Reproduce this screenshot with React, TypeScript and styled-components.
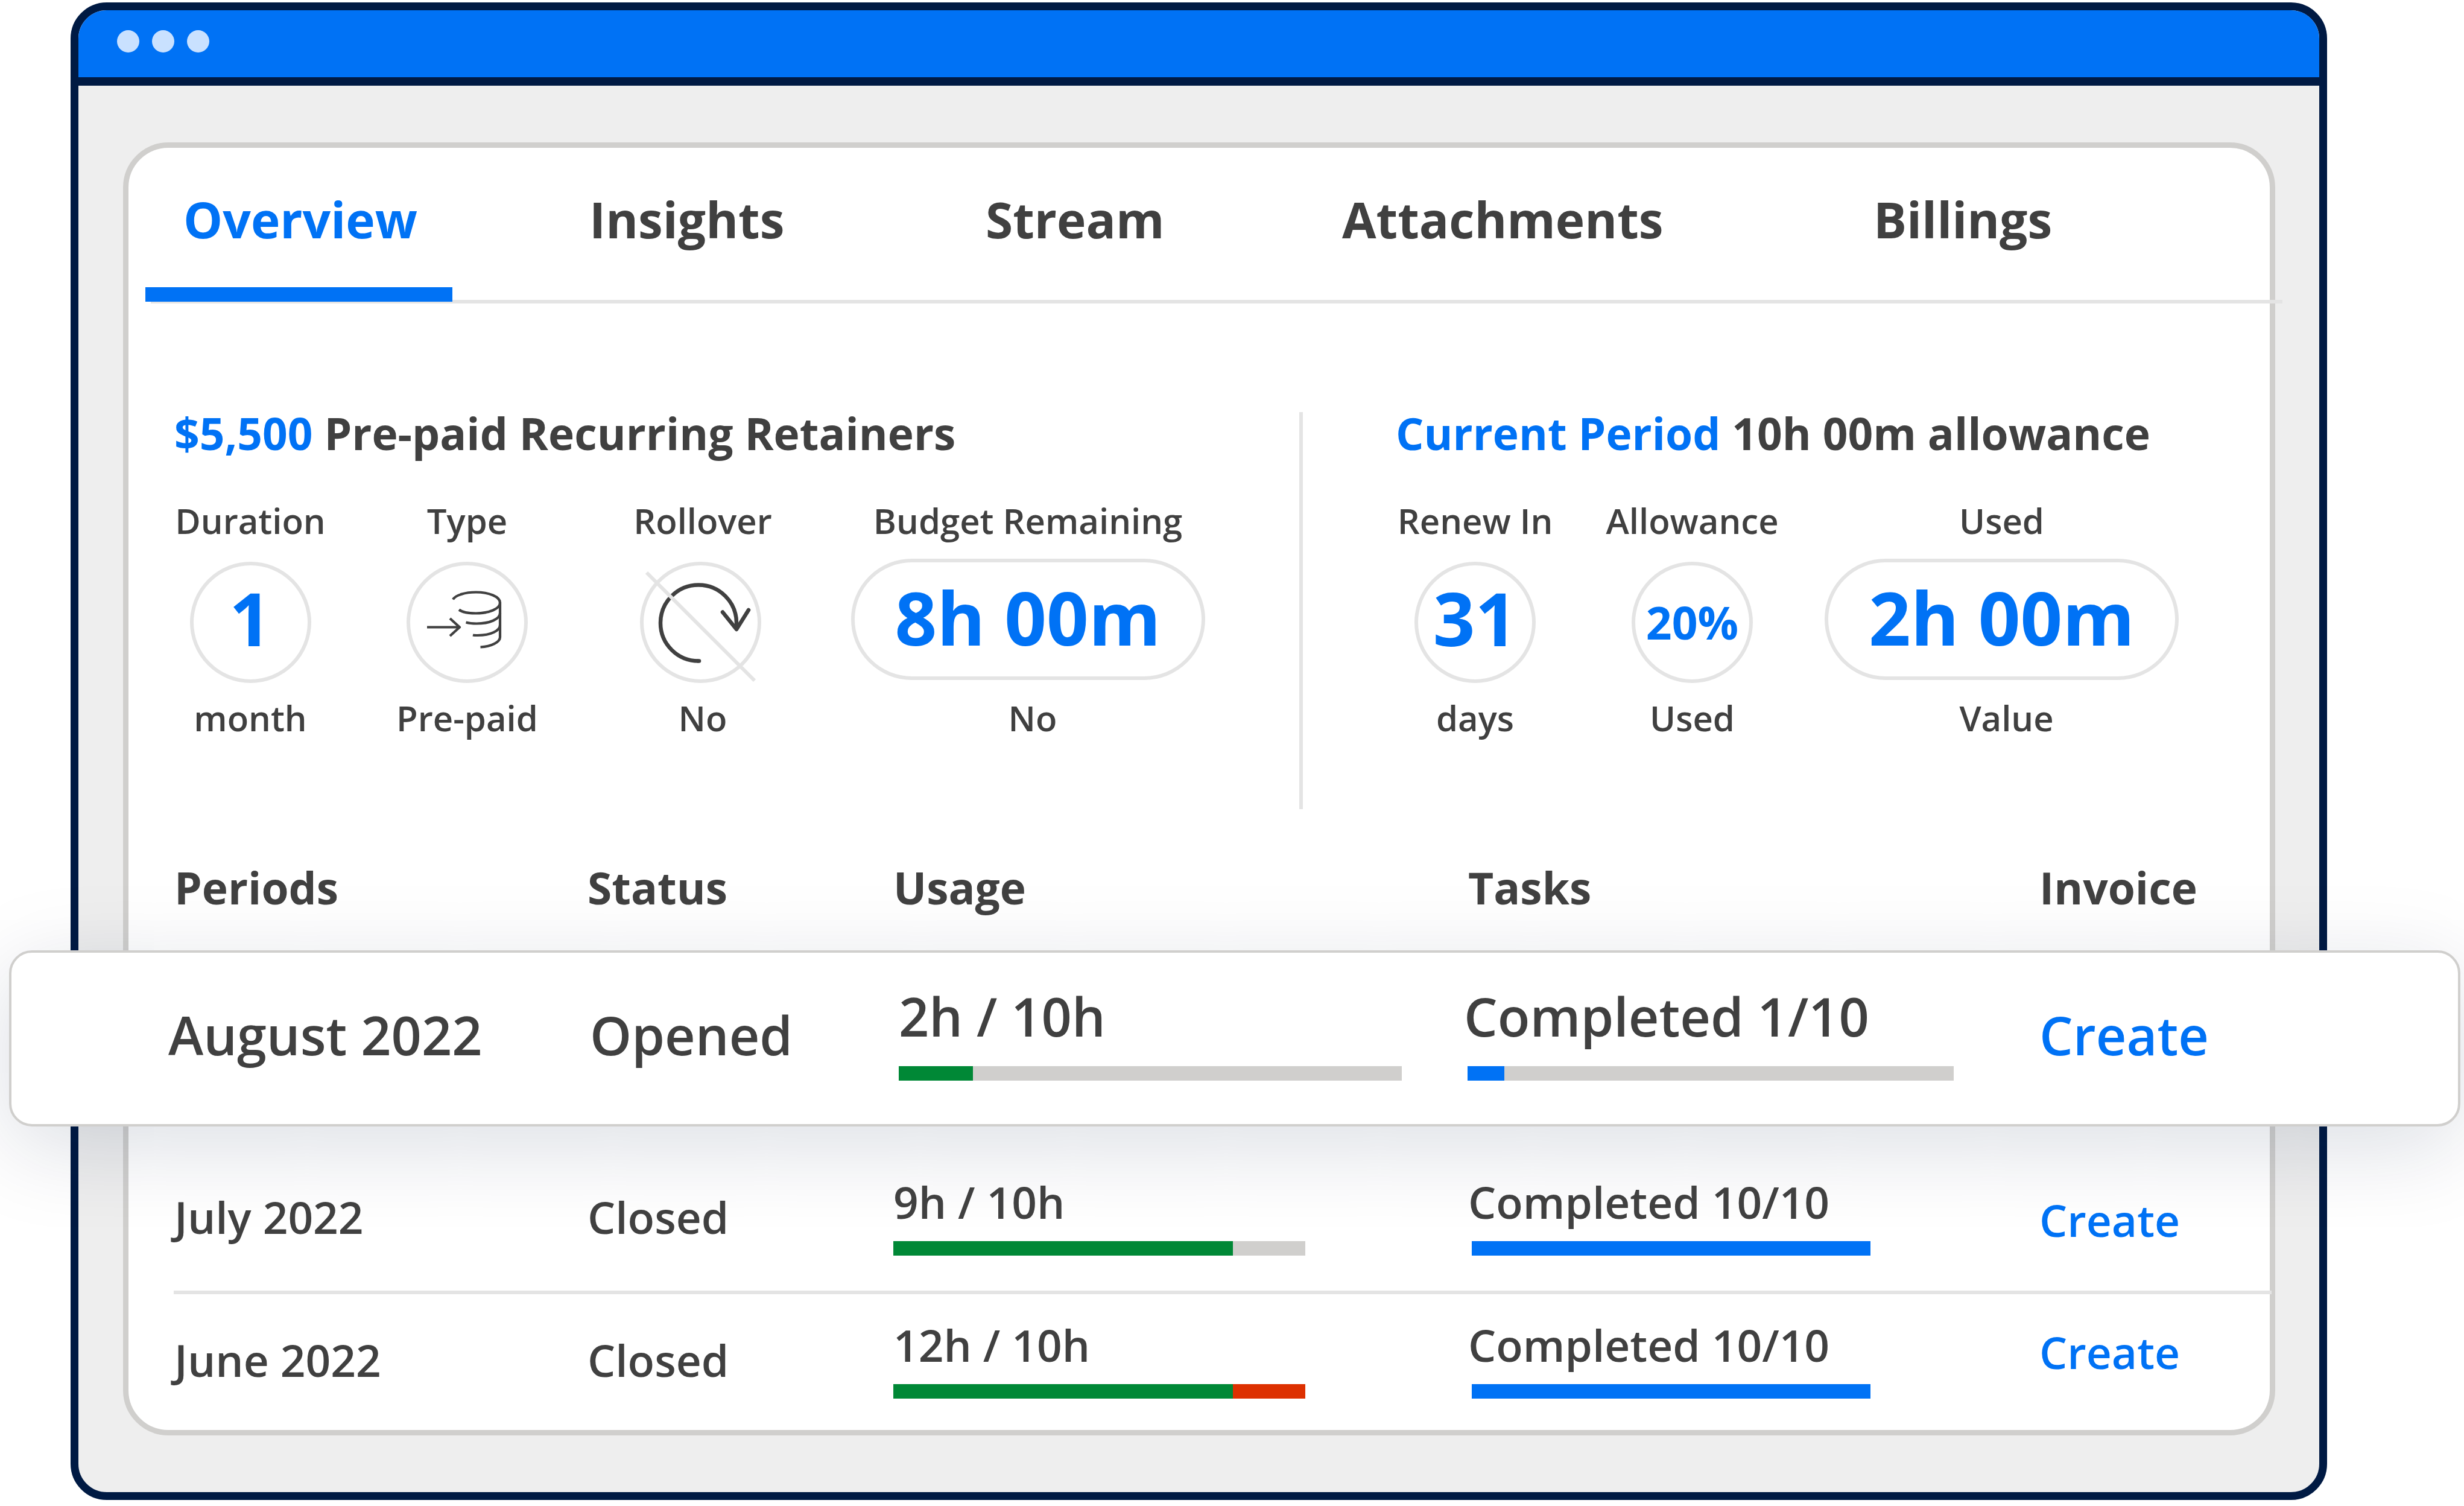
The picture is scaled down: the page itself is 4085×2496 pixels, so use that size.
import React from "react";
import styled, { createGlobalStyle, css } from "styled-components";

const color = {
  blue: "#0072f5",
  navy: "#001a43",
  ink: "#404040",
  line: "#e4e4e4",
  frame: "#d0cfcd",
  canvas: "#eeeeee",
  green: "#008836",
  red: "#dd3000",
};

const GlobalStyle = createGlobalStyle`
  *, *::before, *::after { box-sizing: border-box; }
  body {
    margin: 0;
    background: #ffffff;
    color: ${color.ink};
    font-family: "Open Sans", "Noto Sans", sans-serif;
  }
`;

const Page = styled.main`
  padding: 4px 227px 9px 117px;
`;

const Window = styled.div`
  border: 13px solid ${color.navy};
  border-radius: 60px;
  background: ${color.canvas};
`;

const TitleBar = styled.header`
  display: flex;
  align-items: center;
  gap: 21px;
  height: 125px;
  padding: 0 64px 9px;
  border-bottom: 14px solid ${color.navy};
  border-radius: 47px 47px 0 0;
  background: ${color.blue};
`;

const Dot = styled.span`
  width: 37px;
  height: 37px;
  border-radius: 50%;
  background: #c9e1ff;
`;

const Body = styled.div`
  padding: 94px 73px 94px 74px;
`;

const Card = styled.section`
  border: 9px solid ${color.frame};
  border-radius: 75px;
  background: #ffffff;
`;

const Tabs = styled.nav`
  display: grid;
  grid-template-columns: 673fr 657fr 591fr 881fr 732fr;
  margin: 0 -21px 0 37px;
  border-bottom: 6px solid ${color.line};
`;

const Tab = styled.button<{ $active?: boolean }>`
  justify-self: start;
  margin: 0 0 -3px -9px;
  padding: 62px 58px 56px 63px;
  border: 0;
  border-bottom: 24px solid ${(p) => (p.$active ? color.blue : "transparent")};
  background: none;
  color: ${(p) => (p.$active ? color.blue : color.ink)};
  font: 700 82px/113px "Open Sans", "Noto Sans", sans-serif;
  cursor: pointer;
`;

const Summary = styled.div`
  display: grid;
  grid-template-columns: 1865fr 6px 1603fr;
  padding: 165px 0 0 76px;
`;

const Divider = styled.div`
  margin-top: 15px;
  background: ${color.line};
`;

const Panel = styled.section<{ $side: "left" | "right" }>`
  padding: ${(p) => (p.$side === "left" ? "0 68px 111px 0" : "0 160px 111px 154px")};
`;

const PanelTitle = styled.h2`
  margin: 0 0 55px;
  font-size: 73px;
  font-weight: 700;
  line-height: 100px;
  white-space: nowrap;

  em {
    color: ${color.blue};
    font-style: normal;
  }
`;

const Metrics = styled.div<{ $columns: string }>`
  display: grid;
  grid-template-columns: ${(p) => p.$columns};
`;

const MetricBox = styled.div`
  display: flex;
  flex-direction: column;
  align-items: center;
  min-width: 0;
`;

const MetricText = styled.span<{ $wide?: boolean }>`
  padding-left: ${(p) => (p.$wide ? "16px" : "0")};
  font-size: 58px;
  font-weight: 600;
  line-height: 80px;
  white-space: nowrap;
`;

const Badge = styled.div<{ $wide?: boolean; $small?: boolean }>`
  display: flex;
  flex-shrink: 0;
  align-items: center;
  justify-content: center;
  height: 201px;
  border: 6px solid ${color.line};
  border-radius: 101px;
  color: ${color.blue};
  font-size: ${(p) => (p.$small ? "75px" : "122px")};
  font-weight: 700;
  line-height: 1;
  white-space: nowrap;
  ${(p) =>
    p.$wide
      ? css`
          width: 587px;
          margin: 23px 0;
          padding-bottom: 8px;
        `
      : css`
          width: 201px;
          margin: 28px 0 18px;
          padding-bottom: ${p.$small ? "0" : "16px"};
        `}
`;

const BadgeIcon = styled.svg`
  display: block;
  flex-shrink: 0;
  width: 201px;
  height: 201px;
  margin: 28px 0 18px;
  overflow: visible;
  fill: none;
`;

const Table = styled.table`
  display: block;
  margin-top: 80px;
  font-weight: 600;

  thead,
  tbody {
    display: block;
  }

  th,
  td {
    padding: 0;
    text-align: left;
    white-space: nowrap;
  }
`;

const HeadRow = styled.tr`
  display: grid;
  grid-template-columns: 685fr 507fr 953fr 947fr 382fr;
  padding: 0 0 54px 76px;
  font-size: 73px;
  line-height: 100px;

  th {
    font-weight: 700;
  }
`;

const FeaturedRow = styled.tr`
  display: grid;
  grid-template-columns: 699fr 512fr 937fr 954fr 382fr;
  margin: 0 -316px 41px -198px;
  padding: 45px 312px 72px 260px;
  border: 4px solid ${color.frame};
  border-radius: 38px;
  background: #ffffff;
  box-shadow: 0 32px 150px rgba(0, 26, 67, 0.15);
  font-size: 88px;
  line-height: 120px;
`;

const Row = styled.tr`
  display: grid;
  grid-template-columns: 685fr 507fr 953fr 947fr 385fr;
  margin: 0 -3px 0 75px;
  padding: 34px 0 58px 1px;
  border-bottom: 6px solid ${color.line};
  font-size: 73px;
  line-height: 100px;

  &:last-child {
    padding-bottom: 52px;
    border-bottom: 0;
  }
`;

const Cell = styled.td<{ $drop: number }>`
  && {
    padding-top: ${(p) => p.$drop}px;
  }
`;

const CreateLink = styled.a`
  color: ${color.blue};
  text-decoration: none;
`;

const MeterText = styled.span`
  display: block;
`;

const Track = styled.div<{ $kind: "usage" | "tasks"; $large?: boolean }>`
  display: flex;
  height: 24px;
  margin-top: ${(p) => (p.$large ? "23px" : "15px")};
  margin-left: ${(p) => (p.$kind === "tasks" ? "6px" : "0")};
  width: ${(p) =>
    p.$kind === "usage" ? (p.$large ? "834px" : "683px") : p.$large ? "806px" : "661px"};
  background: ${color.frame};
`;

const Fill = styled.div<{ $tone: string }>`
  background: ${(p) => p.$tone};
`;

type Segment = { share: number; tone: string };

type Period = {
  name: string;
  status: string;
  usage: string;
  usageFill: Segment[];
  tasks: string;
  tasksFill: Segment[];
  textDrop: number;
  linkDrop: number;
};

const featured: Period = {
  name: "August 2022",
  status: "Opened",
  usage: "2h / 10h",
  usageFill: [{ share: 14.8, tone: color.green }],
  tasks: "Completed 1/10",
  tasksFill: [{ share: 7.6, tone: color.blue }],
  textDrop: 31,
  linkDrop: 31,
};

const closed: Period[] = [
  {
    name: "July 2022",
    status: "Closed",
    usage: "9h / 10h",
    usageFill: [{ share: 82.4, tone: color.green }],
    tasks: "Completed 10/10",
    tasksFill: [{ share: 100, tone: color.blue }],
    textDrop: 25,
    linkDrop: 30,
  },
  {
    name: "June 2022",
    status: "Closed",
    usage: "12h / 10h",
    usageFill: [
      { share: 82.4, tone: color.green },
      { share: 17.6, tone: color.red },
    ],
    tasks: "Completed 10/10",
    tasksFill: [{ share: 100, tone: color.blue }],
    textDrop: 25,
    linkDrop: 12,
  },
];

function Meter(props: { text: string; fill: Segment[]; kind: "usage" | "tasks"; large?: boolean }) {
  const total = props.fill.reduce((sum, s) => sum + s.share, 0);
  return (
    <>
      <MeterText>{props.text}</MeterText>
      <Track
        $kind={props.kind}
        $large={props.large}
        role="progressbar"
        aria-label={props.text}
        aria-valuenow={Math.round(total)}
        aria-valuemin={0}
        aria-valuemax={100}
      >
        {props.fill.map((s) => (
          <Fill key={s.tone} $tone={s.tone} style={{ width: `${s.share}%` }} />
        ))}
      </Track>
    </>
  );
}

function PeriodCells({ period, large }: { period: Period; large?: boolean }) {
  return (
    <>
      <Cell $drop={period.textDrop}>{period.name}</Cell>
      <Cell $drop={period.textDrop}>{period.status}</Cell>
      <Cell $drop={0}>
        <Meter text={period.usage} fill={period.usageFill} kind="usage" large={large} />
      </Cell>
      <Cell $drop={0}>
        <Meter text={period.tasks} fill={period.tasksFill} kind="tasks" large={large} />
      </Cell>
      <Cell $drop={period.linkDrop}>
        <CreateLink href="#create">Create</CreateLink>
      </Cell>
    </>
  );
}

function PrepaidIcon() {
  return (
    <BadgeIcon viewBox="0 0 201 201" aria-hidden="true">
      <circle cx="100.5" cy="100.5" r="97.5" stroke={color.line} strokeWidth="6" />
      <g stroke={color.ink} strokeWidth="4.2" strokeLinejoin="round">
        <path d="M77 62.5C81 55.500 97 50.500 115 50.500C137 50.500 155 58 155 68C155 78 137 85.500 115 85.500C103 85.500 92 83.500 87 79.500" />
        <path d="M155 67V125C155 133 141 140.500 122.500 141.500" />
        <path d="M155 85C155 95 138 102.500 116 102.500C110 102.500 104 102 98.500 100.500" />
        <path d="M155 105C155 114 140 122 118 122C115 122 112 122 110 121.500" />
        <path d="M34 108.500H87M72 94L88 108.500L72 123" />
      </g>
    </BadgeIcon>
  );
}

function NoRolloverIcon() {
  return (
    <BadgeIcon viewBox="4 0 201 201" aria-hidden="true">
      <circle cx="100.5" cy="100.5" r="97.5" stroke={color.line} strokeWidth="6" />
      <g stroke={color.ink} strokeWidth="6.5" strokeLinejoin="round">
        <path d="M97 164.500A63 63 0 1 1 160 102V112" />
        <path d="M97 164.500H98" strokeLinecap="round" />
        <path d="M137 83.500L160 112L180 80" strokeLinecap="round" />
      </g>
      <path d="M11 18L190 197" stroke={color.line} strokeWidth="6" />
    </BadgeIcon>
  );
}

function Metric(props: {
  label: string;
  caption: string;
  value?: string;
  icon?: React.ReactNode;
  wide?: boolean;
  small?: boolean;
}) {
  return (
    <MetricBox>
      <MetricText>{props.label}</MetricText>
      {props.icon ?? (
        <Badge $wide={props.wide} $small={props.small}>
          {props.value}
        </Badge>
      )}
      <MetricText $wide={props.wide}>{props.caption}</MetricText>
    </MetricBox>
  );
}

export default function App() {
  return (
    <>
      <GlobalStyle />
      <Page>
        <Window>
          <TitleBar>
            <Dot />
            <Dot />
            <Dot />
          </TitleBar>
          <Body>
            <Card>
              <Tabs>
                <Tab type="button" $active>Overview</Tab>
                <Tab type="button">Insights</Tab>
                <Tab type="button">Stream</Tab>
                <Tab type="button">Attachments</Tab>
                <Tab type="button">Billings</Tab>
              </Tabs>
              <Summary>
                <Panel $side="left">
                  <PanelTitle>
                    <em>$5,500</em> Pre-paid Recurring Retainers
                  </PanelTitle>
                  <Metrics $columns="252fr 467fr 314fr 764fr">
                    <Metric label="Duration" value="1" caption="month" />
                    <Metric label="Type" icon={<PrepaidIcon />} caption="Pre-paid" />
                    <Metric label="Rollover" icon={<NoRolloverIcon />} caption="No" />
                    <Metric label="Budget Remaining" value="8h 00m" caption="No" wide />
                  </Metrics>
                </Panel>
                <Divider />
                <Panel $side="right">
                  <PanelTitle>
                    <em>Current Period</em> 10h 00m allowance
                  </PanelTitle>
                  <Metrics $columns="263fr 457fr 569fr">
                    <Metric label="Renew In" value="31" caption="days" />
                    <Metric label="Allowance" value="20%" caption="Used" small />
                    <Metric label="Used" value="2h 00m" caption="Value" wide />
                  </Metrics>
                </Panel>
              </Summary>
              <Table>
                <thead>
                  <HeadRow>
                    <th scope="col">Periods</th>
                    <th scope="col">Status</th>
                    <th scope="col">Usage</th>
                    <th scope="col">Tasks</th>
                    <th scope="col">Invoice</th>
                  </HeadRow>
                </thead>
                <tbody>
                  <FeaturedRow>
                    <PeriodCells period={featured} large />
                  </FeaturedRow>
                  {closed.map((p) => (
                    <Row key={p.name}>
                      <PeriodCells period={p} />
                    </Row>
                  ))}
                </tbody>
              </Table>
            </Card>
          </Body>
        </Window>
      </Page>
    </>
  );
}
